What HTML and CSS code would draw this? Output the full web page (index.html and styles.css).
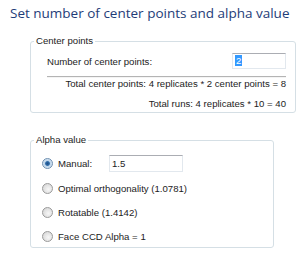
FILE: index.html
```html
<!DOCTYPE html>
<html>
<head>
    <title>Center points and alpha</title>
    <link rel="stylesheet" href="styles.css">
</head>
<body>
    <div class="title">Set number of center points and alpha value</div>

    <fieldset class="group group-center">
        <legend>Center points</legend>
        <div class="content">
            <div class="row">
                <span class="label">Number of center points:</span>
                <div class="textbox small"><span class="selected">2</span></div>
            </div>
            <div class="sep"></div>
            <div class="info first">Total center points: 4 replicates * 2 center points = 8</div>
            <div class="info">Total runs: 4 replicates * 10 = 40</div>
        </div>
    </fieldset>

    <fieldset class="group group-alpha">
        <legend>Alpha value</legend>
        <div class="options">
            <div class="option">
                <span class="radio checked"></span>
                <span class="label manual">Manual:</span>
                <div class="textbox wide">1.5</div>
            </div>
            <div class="option">
                <span class="radio"></span>
                <span class="label">Optimal orthogonality (1.0781)</span>
            </div>
            <div class="option">
                <span class="radio"></span>
                <span class="label">Rotatable (1.4142)</span>
            </div>
            <div class="option">
                <span class="radio"></span>
                <span class="label">Face CCD Alpha = 1</span>
            </div>
        </div>
    </fieldset>
</body>
</html>
```

FILE: styles.css
```css
body {
    margin: 0;
    background-color: #fff;
    font-family: "Liberation Sans", Arial, sans-serif;
    font-size: 9.6px;
    color: #1c1c1c;
}

.title {
    padding: 4px 0 0 10px;
    height: 18px;
    font-family: "Open Sans", sans-serif;
    font-size: 13.5px;
    line-height: 18px;
    color: #1e3c78;
}

.group {
    margin: 0 0 0 30px;
    padding: 0;
    border: 1px solid #d5dfe5;
    border-radius: 3px;
    box-sizing: border-box;
}

.group legend {
    margin-left: 3px;
    padding: 0 2px;
    line-height: 12px;
}

.group-center {
    margin-top: 13px;
    width: 266px;
}

.group-center .content {
    padding: 0 9px 2px 16px;
}

.group-alpha {
    margin-top: 21px;
    width: 244px;
}

.row {
    display: flex;
    align-items: center;
    justify-content: space-between;
    margin-top: 6px;
    height: 16px;
}

.textbox {
    box-sizing: border-box;
    border: 1px solid #e2e8ee;
    border-top-color: #abadb3;
    background-color: #fff;
    padding: 0 2px;
    line-height: 14px;
}

.textbox.small {
    width: 54px;
    height: 16px;
}

.textbox.wide {
    width: 74px;
    height: 17px;
    line-height: 15px;
}

.selected {
    background-color: #3399ff;
    color: #fff;
    padding: 0 1px;
}

.sep {
    margin-top: 7px;
    height: 1px;
    background-color: #b4b4b4;
    border-bottom: 1px solid #f4f4f4;
}

.info {
    text-align: right;
    line-height: 12px;
    margin-top: 8px;
}

.info.first {
    margin-top: 0;
}

.options {
    display: flex;
    flex-direction: column;
    gap: 2px;
    margin-top: 6px;
}

.option {
    display: flex;
    align-items: center;
    height: 22px;
    padding-left: 11px;
}

.option + .option {
    margin-top: 1px;
}

.option + .option + .option {
    margin-top: 0;
}

.radio {
    width: 11px;
    height: 11px;
    box-sizing: border-box;
    border-radius: 50%;
    border: 1px solid #9a9a9a;
    background: radial-gradient(circle at 60% 60%, #f7f7f7 0%, #dcdcdc 70%, #cfcfcf 100%);
    margin-right: 5px;
}

.radio.checked {
    border-color: #6e8fb0;
    background: radial-gradient(circle at 50% 50%, #1f4f86 0%, #2c6aa8 30%, #bcd4ea 45%, #eef4fa 100%);
}

.label.manual {
    width: 51px;
}
```
